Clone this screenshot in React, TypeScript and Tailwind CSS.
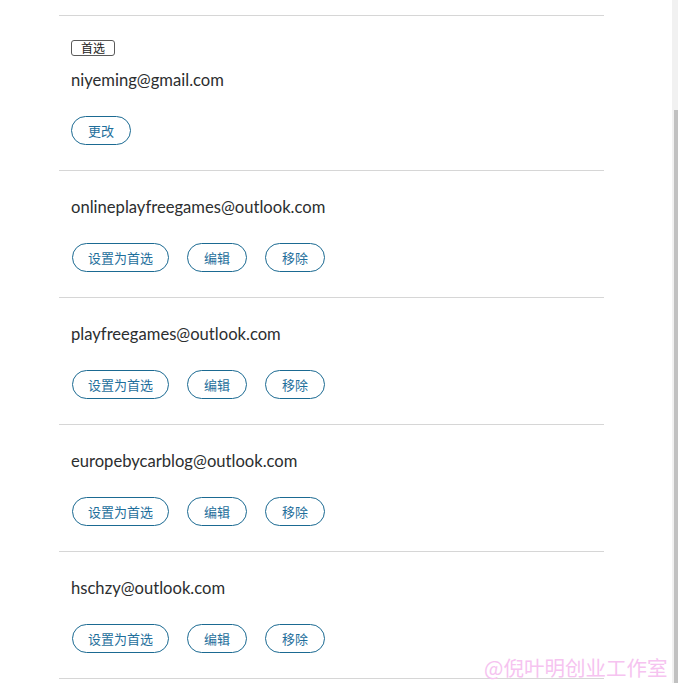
import React from 'react';

const emails = [
  'onlineplayfreegames@outlook.com',
  'playfreegames@outlook.com',
  'europebycarblog@outlook.com',
  'hschzy@outlook.com',
];

const cjk = "font-['Noto_Sans_CJK_SC',sans-serif]";

const Btn: React.FC<{ label: string; w: string }> = ({ label, w }) => (
  <button
    className={`${w} h-[29px] rounded-full border border-[#1b6a92] text-[13px] text-[#1f6f9c] bg-white ${cjk} leading-none`}
  >
    {label}
  </button>
);

export default function App() {
  return (
    <div className="relative w-[678px] h-[683px] overflow-hidden bg-white flex">
      <div className="flex-1">
        <div className="ml-[59px] w-[545px] pt-[15px]">
          {/* preferred email */}
          <div className="border-t border-[#d6d6d6] pt-[24px] pb-[25px] pl-[12px]">
            <div className="flex h-[16px]">
              <span
                className={`flex items-center h-[16px] px-[9px] rounded-[3px] border border-[#5a5a5a] text-[12px] leading-none text-[#222] ${cjk}`}
              >
                首选
              </span>
            </div>
            <div className="mt-[12px] h-[24px] leading-[24px] text-[16.6px] text-[#2c2e2f] font-['Lato',sans-serif]">
              niyeming@gmail.com
            </div>
            <div className="mt-[24px] flex">
              <Btn label="更改" w="w-[60px]" />
            </div>
          </div>

          {emails.map((e) => (
            <div key={e} className="border-t border-[#d6d6d6] pt-[24px] pb-[25px] pl-[12px]">
              <div className="h-[24px] leading-[24px] text-[16.6px] text-[#2c2e2f] font-['Lato',sans-serif]">
                {e}
              </div>
              <div className="mt-[24px] flex gap-[18px] pl-[1px]">
                <Btn label="设置为首选" w="w-[97px]" />
                <Btn label="编辑" w="w-[60px]" />
                <Btn label="移除" w="w-[60px]" />
              </div>
            </div>
          ))}
          <div className="border-t border-[#d6d6d6]" />
        </div>
      </div>

      {/* scrollbar */}
      <div className="w-[6px] bg-[#f1f1f1] flex flex-col">
        <div className="h-[110px]" />
        <div className="flex-1 ml-[2px] bg-[#c1c1c1]" />
      </div>

      <div
        className={`absolute left-[484px] top-[654px] text-[20.5px] leading-[26px] text-[#f6c3f0] ${cjk} pointer-events-none`}
      >
        @倪叶明创业工作室
      </div>
    </div>
  );
}
